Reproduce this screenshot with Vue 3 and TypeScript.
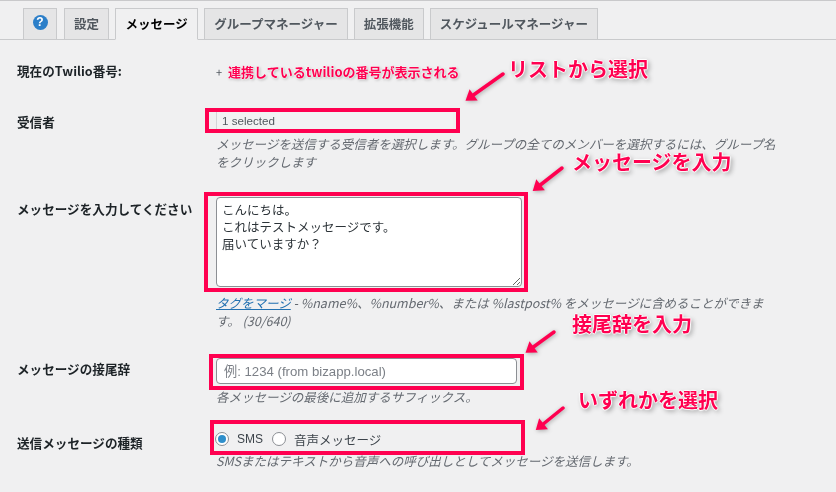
<script setup lang="ts">
interface Note {
  text: string;
  x: number;
  y: number;
}

interface Arrow {
  x1: number;
  y1: number;
  x2: number;
  y2: number;
}

const tabs = ['設定', 'メッセージ', 'グループマネージャー', '拡張機能', 'スケジュールマネージャー'];

const messageText = 'こんにちは。\nこれはテストメッセージです。\n届いていますか？';

const notes: Note[] = [
  { text: 'リストから選択', x: 508, y: 58 },
  { text: 'メッセージを入力', x: 572, y: 151 },
  { text: '接尾辞を入力', x: 572, y: 313 },
  { text: 'いずれかを選択', x: 578, y: 389 },
];

const arrows: Arrow[] = [
  { x1: 503, y1: 74, x2: 472, y2: 96 },
  { x1: 562, y1: 168, x2: 539, y2: 186 },
  { x1: 554, y1: 332, x2: 532, y2: 348 },
  { x1: 563, y1: 408, x2: 542, y2: 425 },
];

function arrowHead(a: Arrow): string {
  const dx = a.x2 - a.x1;
  const dy = a.y2 - a.y1;
  const len = Math.hypot(dx, dy);
  const ux = dx / len;
  const uy = dy / len;
  const tipX = a.x2 + ux * 8;
  const tipY = a.y2 + uy * 8;
  const backX = a.x2 - ux * 2;
  const backY = a.y2 - uy * 2;
  return `${tipX},${tipY} ${backX - uy * 7},${backY + ux * 7} ${backX + uy * 7},${backY - ux * 7}`;
}
</script>

<template>
  <div class="page">
    <nav class="tabs">
      <a class="tab tab-help"><span class="help-icon">?</span></a>
      <a v-for="tab in tabs" :key="tab" class="tab" :class="{ active: tab === 'メッセージ' }">{{ tab }}</a>
    </nav>

    <section class="form">
      <div class="row row-number">
        <div class="label">現在のTwilio番号:</div>
        <div class="value number">
          <span class="plus">+</span>
          <span class="number-note">連携しているtwilioの番号が表示される</span>
        </div>
      </div>

      <div class="row row-to">
        <div class="label">受信者</div>
        <div class="value">
          <div class="select">1 selected</div>
          <p class="help">メッセージを送信する受信者を選択します。グループの全てのメンバーを選択するには、グループ名をクリックします</p>
        </div>
      </div>

      <div class="row row-message">
        <div class="label">メッセージを入力してください</div>
        <div class="value">
          <textarea class="textarea" readonly v-text="messageText"></textarea>
          <p class="help"><a class="merge">タグをマージ</a> - %name%、%number%、または %lastpost% をメッセージに含めることができます。 (30/640)</p>
        </div>
      </div>

      <div class="row row-suffix">
        <div class="label">メッセージの接尾辞</div>
        <div class="value">
          <input class="input" type="text" placeholder="例: 1234 (from bizapp.local)" />
          <p class="help">各メッセージの最後に追加するサフィックス。</p>
        </div>
      </div>

      <div class="row row-type">
        <div class="label">送信メッセージの種類</div>
        <div class="value">
          <div class="radios">
            <span class="radio checked"></span><span class="radio-text sms">SMS</span>
            <span class="radio"></span><span class="radio-text">音声メッセージ</span>
          </div>
          <p class="help">SMSまたはテキストから音声への呼び出しとしてメッセージを送信します。</p>
        </div>
      </div>
    </section>

    <!-- 注釈レイヤー -->
    <div class="mark mark-to"></div>
    <div class="mark mark-message"></div>
    <div class="mark mark-suffix"></div>
    <div class="mark mark-type"></div>

    <svg class="arrows" width="836" height="492" viewBox="0 0 836 492">
      <g v-for="(a, i) in arrows" :key="i" class="arrow">
        <line :x1="a.x1" :y1="a.y1" :x2="a.x2" :y2="a.y2" />
        <polygon :points="arrowHead(a)" />
      </g>
    </svg>

    <div v-for="note in notes" :key="note.text" class="note" :style="{ left: note.x + 'px', top: note.y + 'px' }">{{ note.text }}</div>
  </div>
</template>

<style>
html,
body {
  margin: 0;
  background: #f0f0f1;
}
</style>

<style scoped>
.page {
  position: relative;
  width: 836px;
  height: 492px;
  overflow: hidden;
  box-sizing: border-box;
  padding-top: 1px;
  box-shadow: inset 0 1px 0 #c9c9cb;
  background: #f0f0f1;
  color: #3c434a;
  font-family: "Noto Sans CJK JP", "Liberation Sans", sans-serif;
  font-size: 12.5px;
  filter: blur(0.3px);
}

.tabs {
  display: flex;
  align-items: flex-end;
  gap: 6px;
  height: 38px;
  padding-left: 23px;
  border-bottom: 1px solid #c9cacc;
  box-sizing: content-box;
}

.tab {
  display: flex;
  align-items: center;
  justify-content: center;
  box-sizing: border-box;
  height: 32px;
  margin-bottom: -1px;
  padding: 0 9px 1px;
  border: 1px solid #c9cacc;
  background: #e5e5e6;
  color: #50575e;
  font-size: 12.5px;
  font-weight: 700;
  white-space: nowrap;
}

.tab.active {
  padding: 0 9.5px 1px;
  border-bottom-color: #f0f0f1;
  background: #f0f0f1;
  color: #000;
}

.tab-help {
  width: 34px;
  margin-right: 1px;
  padding: 0 0 4px;
}

.help-icon {
  display: flex;
  align-items: center;
  justify-content: center;
  width: 15px;
  height: 15px;
  border-radius: 50%;
  background: #2c7fc9;
  color: #fff;
  font-family: "Liberation Sans", sans-serif;
  font-size: 12px;
  font-weight: 700;
  line-height: 1;
}

.form {
  padding-left: 17px;
}

.row {
  display: grid;
  grid-template-columns: 199px 566px;
}

.label {
  color: #1d2327;
  font-size: 12.6px;
  font-weight: 700;
  line-height: 18px;
}

.row-number {
  height: 18px;
  margin-top: 22px;
}

.row-to {
  margin-top: 32px;
}

.row-to .label {
  margin-top: 1px;
}

.row-message {
  margin-top: 26px;
}

.row-message .label {
  margin-top: 3px;
}

.row-message .help {
  margin-top: 7px;
}

.row-suffix {
  margin-top: 28px;
}

.row-suffix .label {
  margin-top: 2px;
}

.row-suffix .help {
  margin-top: 4px;
}

.row-type {
  margin-top: 24px;
}

.row-type .label {
  margin-top: 4px;
}

.row-type .help {
  margin-top: 4px;
}

.number {
  display: flex;
  align-items: center;
  gap: 6px;
}

.plus {
  color: #50575e;
  font-size: 11px;
}

.number-note {
  color: #ff0050;
  font-size: 13px;
  font-weight: 700;
  text-shadow: 0 0 2px #fff, 0 0 2px #fff, 1px 1px 3px rgba(0, 0, 0, 0.35);
  white-space: nowrap;
}

.select {
  box-sizing: border-box;
  width: 237px;
  height: 17px;
  padding-left: 5px;
  border-left: 1px solid #d4d4d6;
  background: #f2f2f3;
  color: #50575e;
  font-family: "Liberation Sans", sans-serif;
  font-size: 11.6px;
  line-height: 17px;
}

.help {
  margin: 6px 0 0;
  color: #646970;
  font-size: 12.5px;
  font-style: italic;
  line-height: 18px;
}

.textarea {
  display: block;
  box-sizing: border-box;
  width: 306px;
  height: 90px;
  margin: 0;
  padding: 3px 5px;
  border: 1px solid #8c8f94;
  border-radius: 4px;
  outline: none;
  background: #fff;
  color: #2c3338;
  font-family: "Noto Sans CJK JP", sans-serif;
  font-size: 12.5px;
  line-height: 17px;
}

.merge {
  color: #2271b1;
  text-decoration: underline;
}

.input {
  display: block;
  box-sizing: border-box;
  width: 301px;
  height: 26px;
  margin: 0;
  padding: 0 7px;
  border: 1px solid #8c8f94;
  border-radius: 4px;
  outline: none;
  background: #fff;
  font-family: "Liberation Sans", "Noto Sans CJK JP", sans-serif;
  font-size: 13.2px;
}

.input::placeholder {
  color: #7c8087;
  opacity: 1;
}

.radios {
  display: flex;
  align-items: center;
  height: 18px;
  margin-left: -1px;
  color: #3c434a;
}

.radio {
  position: relative;
  box-sizing: border-box;
  width: 14px;
  height: 14px;
  border: 1px solid #8c8f94;
  border-radius: 50%;
  background: #fff;
}

.radio.checked::after {
  content: "";
  position: absolute;
  top: 2px;
  left: 2px;
  width: 8px;
  height: 8px;
  border-radius: 50%;
  background: #2f8fcb;
}

.radio-text {
  margin: 0 9px 0 8px;
  font-family: "Liberation Sans", "Noto Sans CJK JP", sans-serif;
  font-size: 12.5px;
}

.radio-text.sms {
  font-size: 12px;
}

.mark {
  position: absolute;
  box-sizing: border-box;
  border: 4px solid #ff0050;
  pointer-events: none;
}

.mark-to {
  left: 205px;
  top: 108px;
  width: 255px;
  height: 25px;
}

.mark-message {
  left: 204px;
  top: 192px;
  width: 324px;
  height: 100px;
}

.mark-suffix {
  left: 209px;
  top: 354px;
  width: 315px;
  height: 36px;
}

.mark-type {
  left: 210px;
  top: 420px;
  width: 315px;
  height: 35px;
}

.arrows {
  position: absolute;
  left: 0;
  top: 0;
  filter: drop-shadow(1px 1px 2px rgba(0, 0, 0, 0.3));
  pointer-events: none;
}

.arrow line {
  stroke: #ff0050;
  stroke-width: 3.5;
  stroke-linecap: round;
}

.arrow polygon {
  fill: #ff0050;
}

.note {
  position: absolute;
  color: #ff0050;
  font-size: 20px;
  font-weight: 700;
  line-height: 22px;
  text-shadow:
    1px 0 1px #fff,
    -1px 0 1px #fff,
    0 1px 1px #fff,
    0 -1px 1px #fff,
    2px 2px 5px rgba(0, 0, 0, 0.45);
  white-space: nowrap;
}
</style>
